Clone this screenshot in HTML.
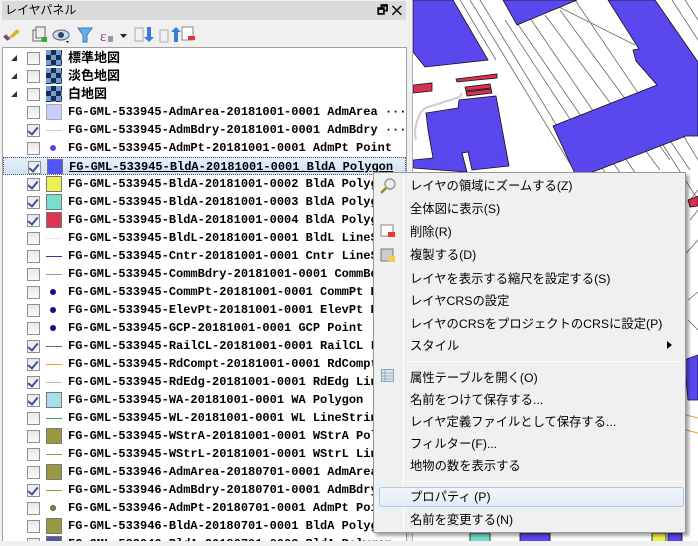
<!DOCTYPE html>
<html><head><meta charset="utf-8">
<style>
*{margin:0;padding:0;box-sizing:border-box}
body{width:698px;height:541px;overflow:hidden;background:#f0f0f0;position:relative;font-family:"Liberation Sans","Noto Sans CJK JP",sans-serif}
#panel{position:absolute;left:0;top:0;width:408px;height:541px;background:#f0f0f0}
#title{position:absolute;left:2px;top:1px;width:404px;height:19px;background:#dadada;font-size:12px;line-height:19px;padding-left:3px;color:#000}
#title .btns{position:absolute;right:4px;top:0;font-size:12px;font-weight:bold}
#tool{position:absolute;left:0;top:22px;height:24px;width:408px}
#list{position:absolute;left:2px;top:47px;width:405px;height:494px;background:#fff;border:1px solid #a0a0a0;border-bottom:none;overflow:hidden}
.row{position:absolute;left:0;height:18px;width:403px;white-space:nowrap;overflow:hidden}
.exp{position:absolute;left:8px;top:6px;width:0;height:0;border-left:6px solid transparent;border-bottom:6px solid #333}
.cb{position:absolute;left:24px;top:3px;width:13px;height:13px;border:1px solid #8f8f8f;background:linear-gradient(#e8e8e8,#fafafa)}
.cb.on::after{content:"";position:absolute;left:2px;top:0px;width:4px;height:8px;border-right:2px solid #3b4fa0;border-bottom:2px solid #3b4fa0;transform:rotate(40deg)}
.ic{position:absolute;left:43px;top:1px;width:16px;height:16px;border:1px solid #777}
.ln{position:absolute;left:43px;top:9px;width:16px;height:1px}
.dot{position:absolute;left:47px;top:6px;width:6px;height:6px;border-radius:50%}
.tx{position:absolute;left:65px;top:0;font-family:"Liberation Mono","Noto Sans CJK JP",monospace;font-weight:bold;font-size:12px;line-height:18px;letter-spacing:0;color:#000}
.jp{font-family:"Liberation Sans","Noto Sans CJK JP",sans-serif;font-size:13px}
.rast{position:absolute;left:43px;top:1px;width:16px;height:16px;background:conic-gradient(#1d2b4a 25%,#6e9fd6 0 50%,#1d2b4a 0 75%,#6e9fd6 0) 0 0/10px 10px}
#map{position:absolute;left:413px;top:0;width:285px;height:541px;background:#fff}
#menu{position:absolute;left:373px;top:172px;width:313px;height:361px;background:#f0f0f0;border:1px solid #979797;box-shadow:3px 3px 3px rgba(0,0,0,.35)}
#menu .vs{position:absolute;left:29px;top:2px;width:1px;height:355px;background:#e0e0e0;border-right:1px solid #fff}
.mi{position:absolute;left:36px;font-size:12.3px;color:#000;line-height:18px;white-space:nowrap}
.sep{position:absolute;left:32px;right:3px;height:1px;background:#d7d7d7;border-bottom:1px solid #fff}
.hl{position:absolute;left:5px;top:314px;width:305px;height:20px;border:1px solid #a8caf0;border-radius:3px;background:linear-gradient(#f2f6fb,#e3ecf7)}
</style></head><body>
<div id="panel">
<div id="title">レイヤパネル<span class="btns">🗗 ✕</span></div>
<div id="tool">
<svg width="210" height="24">
<path d="M9 15l8-8 3 3-8 6z" fill="#e0b020"/><path d="M6 12l5 5-4 1-3-3z" fill="#d04040"/><path d="M4 14l4 4" stroke="#3050c0" stroke-width="2"/>
<rect x="33" y="8" width="9" height="11" fill="none" stroke="#666"/><rect x="36" y="5" width="9" height="11" fill="#eee" stroke="#666"/><rect x="42" y="15" width="5" height="5" fill="#3a3"/>
<ellipse cx="61" cy="13" rx="8" ry="5" fill="#cde" stroke="#567"/><circle cx="61" cy="13" r="3" fill="#346"/><path d="M66 19l3 0-1.5 2z" fill="#000"/>
<path d="M78 6h14l-5 7v7h-4v-7z" fill="#6ab0e8" stroke="#3a7ab8"/>
<text x="100" y="19" font-size="15" fill="#8a3a8a" font-family="Liberation Serif">ε</text><rect x="108" y="14" width="5" height="6" fill="#999"/><path d="M120 12h7l-3.5 4z" fill="#222"/>
<rect x="135" y="6" width="8" height="13" fill="none" stroke="#aaa"/><path d="M147 5v10h-3l5 5 5-5h-3V5z" fill="#3a7ad8"/>
<rect x="160" y="8" width="8" height="12" fill="none" stroke="#aaa"/><path d="M174 20V10h-3l5-5 5 5h-3v10z" fill="#3a7ad8"/>
<rect x="182" y="5" width="11" height="13" fill="#fff" stroke="#888"/><rect x="188" y="14" width="7" height="4" fill="#e33"/>
</svg></div>
<div id="list">
<div class="row" style="top:1px"><div class="exp"></div><div class="cb"></div><div class="rast"></div><div class="tx jp">標準地図</div></div>
<div class="row" style="top:19px"><div class="exp"></div><div class="cb"></div><div class="rast"></div><div class="tx jp">淡色地図</div></div>
<div class="row" style="top:37px"><div class="exp"></div><div class="cb"></div><div class="rast"></div><div class="tx jp">白地図</div></div>
<div class="row" style="top:55px"><div class="cb"></div><div class="ic" style="background:#ccccff;border-color:#aaa"></div><div class="tx">FG-GML-533945-AdmArea-20181001-0001 AdmArea ···</div></div>
<div class="row" style="top:73px"><div class="cb on"></div><div class="ln" style="background:#ccc"></div><div class="tx">FG-GML-533945-AdmBdry-20181001-0001 AdmBdry ···</div></div>
<div class="row" style="top:91px"><div class="cb"></div><div class="dot" style="background:#5544dd"></div><div class="tx">FG-GML-533945-AdmPt-20181001-0001 AdmPt Point</div></div>
<div class="row" style="top:109px;background:linear-gradient(#e6f0fb,#cfe1f6);border:1px dotted #555"><div class="cb on"></div><div class="ic" style="background:#5555ff"></div><div class="tx" style="text-decoration:underline">FG-GML-533945-BldA-20181001-0001 BldA Polygon</div></div>
<div class="row" style="top:127px"><div class="cb on"></div><div class="ic" style="background:#eeee55"></div><div class="tx">FG-GML-533945-BldA-20181001-0002 BldA Polygon</div></div>
<div class="row" style="top:145px"><div class="cb on"></div><div class="ic" style="background:#77ddcc"></div><div class="tx">FG-GML-533945-BldA-20181001-0003 BldA Polygon</div></div>
<div class="row" style="top:163px"><div class="cb on"></div><div class="ic" style="background:#dd3355"></div><div class="tx">FG-GML-533945-BldA-20181001-0004 BldA Polygon</div></div>
<div class="row" style="top:181px"><div class="cb"></div><div class="ln" style="background:#e4e4f4"></div><div class="tx">FG-GML-533945-BldL-20181001-0001 BldL LineString</div></div>
<div class="row" style="top:199px"><div class="cb"></div><div class="ln" style="background:#3333bb"></div><div class="tx">FG-GML-533945-Cntr-20181001-0001 Cntr LineString</div></div>
<div class="row" style="top:217px"><div class="cb"></div><div class="ln" style="background:#999"></div><div class="tx">FG-GML-533945-CommBdry-20181001-0001 CommBdry</div></div>
<div class="row" style="top:235px"><div class="cb"></div><div class="dot" style="background:#111188"></div><div class="tx">FG-GML-533945-CommPt-20181001-0001 CommPt Point</div></div>
<div class="row" style="top:253px"><div class="cb"></div><div class="dot" style="background:#111188"></div><div class="tx">FG-GML-533945-ElevPt-20181001-0001 ElevPt Point</div></div>
<div class="row" style="top:271px"><div class="cb"></div><div class="dot" style="background:#111188"></div><div class="tx">FG-GML-533945-GCP-20181001-0001 GCP Point</div></div>
<div class="row" style="top:289px"><div class="cb on"></div><div class="ln" style="background:#666688"></div><div class="tx">FG-GML-533945-RailCL-20181001-0001 RailCL LineString</div></div>
<div class="row" style="top:307px"><div class="cb on"></div><div class="ln" style="background:#e8a020"></div><div class="tx">FG-GML-533945-RdCompt-20181001-0001 RdCompt</div></div>
<div class="row" style="top:325px"><div class="cb on"></div><div class="ln" style="background:#bbb"></div><div class="tx">FG-GML-533945-RdEdg-20181001-0001 RdEdg LineString</div></div>
<div class="row" style="top:343px"><div class="cb on"></div><div class="ic" style="background:#aaddee"></div><div class="tx">FG-GML-533945-WA-20181001-0001 WA Polygon</div></div>
<div class="row" style="top:361px"><div class="cb"></div><div class="ln" style="background:#33aa55"></div><div class="tx">FG-GML-533945-WL-20181001-0001 WL LineString</div></div>
<div class="row" style="top:379px"><div class="cb"></div><div class="ic" style="background:#999944"></div><div class="tx">FG-GML-533945-WStrA-20181001-0001 WStrA Polygon</div></div>
<div class="row" style="top:397px"><div class="cb"></div><div class="ln" style="background:#999933"></div><div class="tx">FG-GML-533945-WStrL-20181001-0001 WStrL LineString</div></div>
<div class="row" style="top:415px"><div class="cb"></div><div class="ic" style="background:#999944"></div><div class="tx">FG-GML-533946-AdmArea-20180701-0001 AdmArea</div></div>
<div class="row" style="top:433px"><div class="cb on"></div><div class="ln" style="background:#999933"></div><div class="tx">FG-GML-533946-AdmBdry-20180701-0001 AdmBdry</div></div>
<div class="row" style="top:451px"><div class="cb"></div><div class="dot" style="background:#888833;border:1px solid #555"></div><div class="tx">FG-GML-533946-AdmPt-20180701-0001 AdmPt Point</div></div>
<div class="row" style="top:469px"><div class="cb"></div><div class="ic" style="background:#999944"></div><div class="tx">FG-GML-533946-BldA-20180701-0001 BldA Polygon</div></div>
<div class="row" style="top:487px"><div class="cb"></div><div class="ic" style="background:#555599"></div><div class="tx">FG-GML-533946-BldA-20180701-0002 BldA Polygon</div></div>
</div>
</div>
<div style="position:absolute;left:408px;top:0;width:5px;height:541px;background:#f0f0f0;border-right:1px solid #b0b0b0"></div>
<div id="map">
<svg width="285" height="541" viewBox="413 0 285 541">
<g stroke="#666" stroke-width="0.8" fill="none">
<path d="M460 0L496 60M470 0L580 180M480 0L590 180M505 20L610 180M515 20L625 180M530 18L640 180M545 15L660 170M560 10L670 160M575 0L690 170M545 0L635 45M672 0L698 40M685 0L698 20M660 140L698 200M680 130L698 160"/>
<path d="M690 200L698 190M690 220L698 210M680 260L698 240M688 300L698 292M688 320L698 330"/>
</g>
<path d="M416 140C413 130 418 110 428 107L460 97L462 93" stroke="#ccc" stroke-width="2" fill="none"/>
<g fill="#5a48ee" stroke="#111" stroke-width="0.8">
<path d="M413 0L453 0L488 60L425 67L413 52Z"/>
<path d="M503 0L577 0L517 25Z"/>
<path d="M608 0L655 0L698 62L698 136L686 136L577 178L553 126L657 85L636 61L633 50L639 49Z"/>
<path d="M426 113L458 108L459 100L496 96L509 166L472 170L468 152L462 153L467 172L413 168L413 160L433 158L428 130Z"/>
<path d="M684 360L698 355L698 400L688 400Z"/>
</g>
<g fill="#d83050" stroke="#111" stroke-width="0.8">
<path d="M413 85L432 83L432 91L413 93Z"/><path d="M456 79L497 74L497 78L457 82Z"/><path d="M465 87L490 84L491 88L466 91Z"/><path d="M466 92L491 89L492 93L467 96Z"/><path d="M688 200L698 196L698 206L690 207Z"/>
</g>
<path d="M686 415L698 418M686 430L698 433" stroke="#e8a020"/>
<g stroke="#111" stroke-width="0.8"><rect x="470" y="533" width="20" height="10" fill="#77ddcc"/><rect x="520" y="533" width="30" height="10" fill="#5a48ee"/><rect x="652" y="533" width="14" height="10" fill="#eeee55"/><rect x="668" y="533" width="14" height="10" fill="#5a48ee"/></g>
</svg>
</div>
<div id="menu">
<div class="vs"></div>
<svg style="position:absolute;left:5px;top:4px" width="20" height="100">
<circle cx="11" cy="7" r="5" fill="#eee" stroke="#999" stroke-width="1.5"/><path d="M7 11l-5 5" stroke="#b08020" stroke-width="2.5"/>
<rect x="2" y="48" width="12" height="11" fill="#fff" stroke="#888"/><rect x="9" y="55" width="7" height="5" fill="#e33"/>
<rect x="2" y="72" width="12" height="12" fill="#ccc" stroke="#777"/><rect x="9" y="79" width="7" height="6" fill="#ec5"/>
</svg>
<svg style="position:absolute;left:7px;top:196px" width="14" height="14"><rect x="0.5" y="0.5" width="12" height="12" fill="#dde8f5" stroke="#8aa"/><path d="M1 4h12M1 7h12M1 10h12M4 1v12" stroke="#9ab"/></svg>
<div class="mi" style="top:4px">レイヤの領域にズームする(Z)</div>
<div class="mi" style="top:27px">全体図に表示(S)</div>
<div class="mi" style="top:50px">削除(R)</div>
<div class="mi" style="top:73px">複製する(D)</div>
<div class="mi" style="top:97px">レイヤを表示する縮尺を設定する(S)</div>
<div class="mi" style="top:119px">レイヤCRSの設定</div>
<div class="mi" style="top:142px">レイヤのCRSをプロジェクトのCRSに設定(P)</div>
<div class="mi" style="top:164px">スタイル</div>
<div style="position:absolute;left:293px;top:168px;border-left:5px solid #000;border-top:4px solid transparent;border-bottom:4px solid transparent"></div>
<div class="sep" style="top:188px"></div>
<div class="mi" style="top:196px">属性テーブルを開く(O)</div>
<div class="mi" style="top:218px">名前をつけて保存する...</div>
<div class="mi" style="top:240px">レイヤ定義ファイルとして保存する...</div>
<div class="mi" style="top:262px">フィルター(F)...</div>
<div class="mi" style="top:284px">地物の数を表示する</div>
<div class="sep" style="top:308px"></div>
<div class="hl"></div>
<div class="mi" style="top:315px">プロパティ (P)</div>
<div class="mi" style="top:338px">名前を変更する(N)</div>
</div>
</body></html>
